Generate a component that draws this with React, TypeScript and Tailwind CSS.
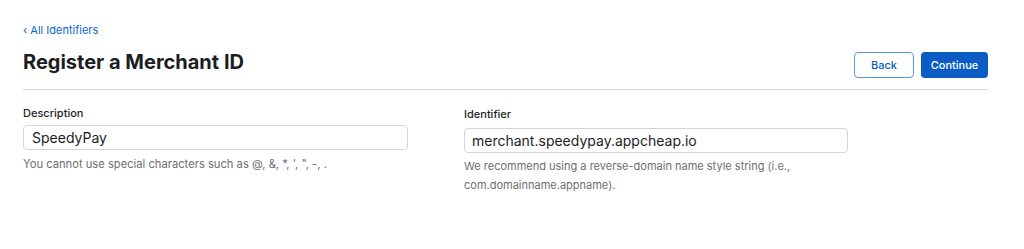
import React from "react";

export default function App() {
  return (
    <div
      className="w-full h-[249px] bg-white pl-[23px] pr-[36px] pt-[23px] text-[#1d1d1f]"
      style={{ fontFamily: "Inter, 'Noto Sans', sans-serif" }}
    >
      <a href="#" className="block text-[11px] leading-[14px] text-[#0a66d0]">
        ‹ All Identifiers
      </a>

      <div className="flex justify-between items-start mt-[13px]">
        <h1 className="text-[20px] leading-[24px] font-bold">
          Register a Merchant ID
        </h1>
        <div className="flex gap-[7px] mt-[2px]">
          <button className="w-[60px] h-[26px] rounded-[4px] border border-[#5b95dc] bg-white text-[11px] font-medium text-[#0a5bc4]">
            Back
          </button>
          <button className="w-[67px] h-[26px] rounded-[4px] bg-[#0b5cc5] text-[11px] font-medium text-white">
            Continue
          </button>
        </div>
      </div>

      <div className="mt-[11px] h-px bg-[#d9d9d9]" />

      <div className="flex gap-[56px] mt-[16px]">
        <div className="w-[385px]">
          <label className="block text-[11px] leading-[14px] font-medium text-[#1d1d1f]">
            Description
          </label>
          <div className="mt-[5px] h-[25px] rounded-[4px] border border-[#d4d4d8] px-[8px] flex items-center text-[14px] text-[#1d1d1f]">
            SpeedyPay
          </div>
          <p className="mt-[5px] text-[11.2px] leading-[18px] text-[#6e6e73]">
            You cannot use special characters such as @, &amp;, *, ', ", -, .
          </p>
        </div>

        <div className="w-[384px]">
          <label className="block text-[11px] leading-[14px] font-medium text-[#1d1d1f] mt-px">
            Identifier
          </label>
          <div className="mt-[7px] h-[25px] rounded-[4px] border border-[#d4d4d8] px-[7px] flex items-center text-[14px] text-[#1d1d1f]">
            merchant.speedypay.appcheap.io
          </div>
          <p className="mt-[4px] text-[11px] leading-[19px] text-[#6e6e73]">
            We recommend using a reverse-domain name style string (i.e.,
            com.domainname.appname).
          </p>
        </div>
      </div>
    </div>
  );
}
